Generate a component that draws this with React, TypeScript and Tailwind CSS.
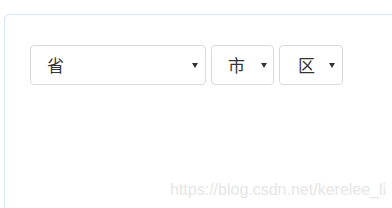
const fields = [
  { label: "省", width: "w-[176px]", pl: "pl-[16px]", pr: "pr-[7px]" },
  { label: "市", width: "w-[63px]", pl: "pl-[16px]", pr: "pr-[6px]" },
  { label: "区", width: "w-[64px]", pl: "pl-[18px]", pr: "pr-[7px]" },
]

function Caret() {
  return (
    <svg width="6" height="5" viewBox="0 0 6 5" className="shrink-0">
      <path d="M0 0 H6 L3 5 Z" fill="#333" />
    </svg>
  )
}

export default function App() {
  return (
    <div className="relative w-[392px] h-[208px] overflow-hidden bg-white pl-[4px] pt-[14px] font-['Liberation_Sans','Noto_Sans_CJK_SC',sans-serif]">
      <div className="w-[420px] h-[230px] border border-[#d6e6f5] rounded-[5px] pl-[25px] pt-[30px]">
        <div className="flex gap-[5px]">
          {fields.map((f) => (
            <div
              key={f.label}
              className={`${f.width} ${f.pl} ${f.pr} h-[40px] flex items-center justify-between border border-[#d9d9d9] rounded-[4px] bg-white`}
            >
              <span className="text-[17px] leading-none text-[#333] pt-[3px]">{f.label}</span>
              <Caret />
            </div>
          ))}
        </div>
      </div>
      <div className="absolute left-[170px] top-[180px] text-[16px] leading-[20px] text-[#e6e6e6]">
        https://blog.csdn.net/kerelee_li
      </div>
    </div>
  )
}
